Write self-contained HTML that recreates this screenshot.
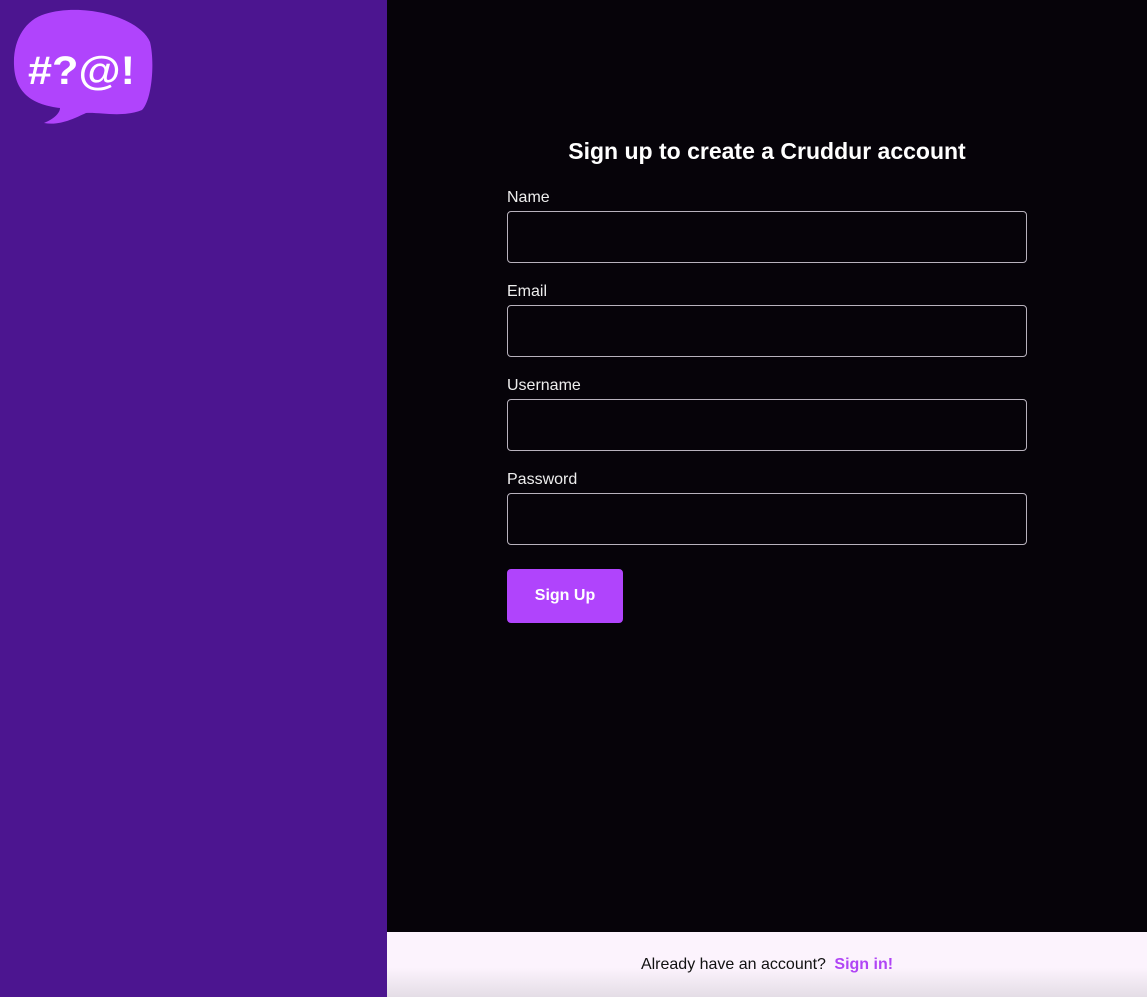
<!DOCTYPE html>
<html><head><style>
html,body{margin:0;padding:0;width:1147px;height:997px;overflow:hidden;font-family:"Liberation Sans",sans-serif;}
.left{position:absolute;left:0;top:0;width:387px;height:997px;background:#4c1590;}
.right{position:absolute;left:387px;top:0;width:760px;height:932px;background:#060309;}
.foot{position:absolute;left:387px;top:932px;width:760px;height:65px;background:linear-gradient(#fcf3fd 0%,#fcf3fd 55%,#e4dde6 100%);text-align:center;line-height:66px;font-size:16px;color:#111;}
.foot a{color:#b044f5;font-weight:bold;margin-left:4px;}
h1{position:absolute;left:0;width:760px;top:138px;margin:0;text-align:center;color:#fff;font-size:23px;font-weight:bold;}
.lab{position:absolute;left:120px;color:#eee;font-size:16px;}
.inp{position:absolute;left:120px;border:1px solid #b8b2bd;border-radius:4px;box-sizing:border-box;width:520px;height:52px;}
.btn{position:absolute;left:120px;top:569px;width:116px;height:54px;background:#b044fc;border-radius:4px;color:#fff;font-weight:bold;font-size:16px;text-align:center;line-height:54px;}
</style></head><body>
<div class="left">
<svg width="170" height="140" style="position:absolute;left:0;top:0">
<path d="M45 14 C85 2 140 18 150 42 C155 62 152 100 142 110 C122 118 100 112 86 113 C75 118 60 126 44 123 C56 118 60 112 60 108 C35 105 15 95 14 65 C13 40 25 20 45 14 Z" fill="#b044fc"/>
<text x="28" y="84" font-family="Liberation Sans" font-weight="bold" font-size="40" fill="#fff" textLength="107" lengthAdjust="spacingAndGlyphs">#?@!</text>
</svg>
</div>
<div class="right">
<h1>Sign up to create a Cruddur account</h1>
<div class="lab" style="top:189px">Name</div><div class="inp" style="top:211px"></div>
<div class="lab" style="top:283px">Email</div><div class="inp" style="top:305px"></div>
<div class="lab" style="top:377px">Username</div><div class="inp" style="top:399px"></div>
<div class="lab" style="top:471px">Password</div><div class="inp" style="top:493px"></div>
<div class="btn">Sign Up</div>
</div>
<div class="foot">Already have an account? <a>Sign in!</a></div>
</body></html>
